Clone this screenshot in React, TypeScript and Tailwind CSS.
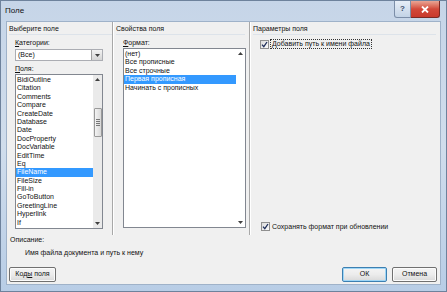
import React from "react";

const FIELDS = [
  "BidiOutline",
  "Citation",
  "Comments",
  "Compare",
  "CreateDate",
  "Database",
  "Date",
  "DocProperty",
  "DocVariable",
  "EditTime",
  "Eq",
  "FileName",
  "FileSize",
  "Fill-in",
  "GoToButton",
  "GreetingLine",
  "Hyperlink",
  "If",
];

const FORMATS = [
  "(нет)",
  "Все прописные",
  "Все строчные",
  "Первая прописная",
  "Начинать с прописных",
];

function Arrow({ up }: { up?: boolean }) {
  return (
    <svg width="5" height="3" viewBox="0 0 5 3" className="block">
      <path d={up ? "M0 3 L2.5 0 L5 3Z" : "M0 0 L2.5 3 L5 0Z"} fill="#404040" />
    </svg>
  );
}

function CheckBox() {
  return (
    <span className="flex h-[9px] w-[9px] items-center justify-center border border-[#8f8f8f] bg-gradient-to-br from-[#dcdcdc] to-[#fbfbfb]">
      <svg width="7" height="7" viewBox="0 0 7 7" className="block">
        <path d="M1 3.6 L2.8 5.6 L6 1" fill="none" stroke="#1f2f5a" strokeWidth="1.3" />
      </svg>
    </span>
  );
}

// scrollbar column for the list boxes
function ScrollBar({ thumb }: { thumb?: boolean }) {
  return (
    <div className="flex w-[9px] flex-col items-center justify-between bg-[#eaeaea] py-[3px]">
      <Arrow up />
      {thumb && (
        <div className="absolute top-[33px] flex h-[29px] w-[8px] flex-col items-center justify-center gap-[1px] rounded-[1px] border border-[#9a9a9a] bg-gradient-to-r from-[#f3f3f3] to-[#d8d8d8]">
          <span className="h-px w-[4px] bg-[#777]" />
          <span className="h-px w-[4px] bg-[#777]" />
          <span className="h-px w-[4px] bg-[#777]" />
          <span className="h-px w-[4px] bg-[#777]" />
        </div>
      )}
      <Arrow />
    </div>
  );
}

function Header({ children }: { children: React.ReactNode }) {
  return (
    <div className="flex flex-col">
      <span className="h-[9px] leading-[9px]">{children}</span>
      <span className="mt-[1px] h-px w-full bg-[#dde3ea]" />
    </div>
  );
}

function Separator() {
  return (
    <div className="flex h-full">
      <span className="w-px bg-[#a8a8a8]" />
      <span className="w-px bg-white" />
    </div>
  );
}

function Button({ children, primary }: { children: React.ReactNode; primary?: boolean }) {
  return (
    <div
      className={
        "flex h-[15px] items-center justify-center rounded-[2px] border bg-gradient-to-b from-[#f4f4f4] via-[#ececec] to-[#d9d9d9] " +
        (primary ? "border-[#3c7fb1] shadow-[inset_0_0_0_1px_#9fd6f6]" : "border-[#707070] shadow-[inset_0_0_0_1px_#fbfbfb]")
      }
    >
      {children}
    </div>
  );
}

export default function App() {
  return (
    <div
      className="relative flex h-[292px] w-[447px] flex-col overflow-hidden border border-[#6e829c] bg-gradient-to-b from-[#c6d5e8] via-[#d0ddec] to-[#b8cde6] text-[7px] text-[#111]"
      style={{ fontFamily: '"Liberation Sans", Arial, sans-serif' }}
    >
      {/* title bar */}
      <div className="flex h-[20px] items-start justify-between pl-[4px] pr-[6px]">
        <span className="mt-[5px] text-[8px] leading-[9px]">Поле</span>
        <div className="flex">
          <div className="flex h-[17px] w-[17px] items-center justify-center rounded-bl-[3px] border border-t-0 border-[#7c8ea8] bg-gradient-to-b from-[#e7eef7] to-[#c3d3e6] text-[8px] font-bold text-[#3b4d68]">
            ?
          </div>
          <div className="flex h-[17px] w-[29px] items-center justify-center rounded-br-[3px] border border-l-0 border-t-0 border-[#7a2a25] bg-gradient-to-b from-[#e8a595] via-[#d2493a] to-[#c9392c]">
            <svg width="8" height="7" viewBox="0 0 8 7">
              <path d="M1 0.5 L7 6.5 M7 0.5 L1 6.5" stroke="white" strokeWidth="1.8" />
            </svg>
          </div>
        </div>
      </div>

      {/* dialog body */}
      <div className="mx-[5px] mb-[6px] flex flex-1 flex-col border border-[#9fb2c9] bg-[#f0f0f0]">
        <div className="flex h-[213px]">
          {/* left column */}
          <div className="flex w-[105px] flex-col pl-[2px] pt-[2px]">
            <Header>Выберите поле</Header>
            <div className="pl-[6px]">
              <div className="mt-[3px] h-[9px] leading-[9px]">
                <span className="underline">К</span>атегории:
              </div>
              <div className="mt-[2px] flex h-[12px] w-[88px] border border-[#abadb3] bg-white">
                <span className="flex-1 pl-[2px] leading-[10px]">(Все)</span>
                <div className="flex w-[11px] items-center justify-center border-l border-[#a0a0a0] bg-gradient-to-b from-[#f2f2f2] to-[#d5d5d5]">
                  <Arrow />
                </div>
              </div>
              <div className="mt-[3px] h-[9px] leading-[9px]">
                <span className="underline">П</span>оля:
              </div>
              <div className="relative mt-[1px] flex h-[155px] w-[88px] border border-[#828790] bg-white">
                <div className="flex flex-1 flex-col pt-[1px]">
                  {FIELDS.map((f) => (
                    <div
                      key={f}
                      className={
                        "h-[8.4px] pl-[1px] leading-[8.4px] " +
                        (f === "FileName" ? "bg-[#3399ff] text-white" : "")
                      }
                    >
                      {f}
                    </div>
                  ))}
                </div>
                <div className="relative flex">
                  <ScrollBar thumb />
                </div>
              </div>
            </div>
          </div>

          <Separator />

          {/* middle column */}
          <div className="flex w-[135px] flex-col pl-[2px] pr-[4px] pt-[2px]">
            <Header>Свойства поля</Header>
            <div className="pl-[7px]">
              <div className="mt-[3px] h-[9px] leading-[9px]">
                <span className="underline">Ф</span>ормат:
              </div>
              <div className="mt-[1px] flex h-[180px] w-[123px] border border-[#828790] bg-white">
                <div className="flex flex-1 flex-col pt-[1px]">
                  {FORMATS.map((f) => (
                    <div
                      key={f}
                      className={
                        "h-[8.4px] pl-[1px] leading-[8.4px] " +
                        (f === "Первая прописная" ? "bg-[#3399ff] text-white" : "")
                      }
                    >
                      {f}
                    </div>
                  ))}
                </div>
                <div className="flex w-[9px] flex-col items-center justify-between py-[3px]">
                  <Arrow up />
                  <Arrow />
                </div>
              </div>
            </div>
          </div>

          <Separator />

          {/* right column */}
          <div className="flex flex-1 flex-col pl-[2px] pr-[4px] pt-[2px]">
            <Header>Параметры поля</Header>
            <div className="mt-[4px] flex items-center gap-[1px] pl-[7px]">
              <CheckBox />
              <span className="border border-dotted border-[#333] px-[1px] leading-[8px]">
                Добавить путь к имени файла
              </span>
            </div>
            <div className="flex-1" />
            <div className="mb-[4px] flex items-center gap-[2px] pl-[8px]">
              <CheckBox />
              <span className="leading-[8px]">Сохранять формат при обновлении</span>
            </div>
          </div>
        </div>

        {/* description */}
        <div className="pl-[3px] leading-[9px]">Описание:</div>
        <div className="mt-[4px] pl-[18px] leading-[9px]">Имя файла документа и путь к нему</div>

        {/* buttons */}
        <div className="mt-[10px] flex items-center pl-[2px] pr-[3px]">
          <div className="w-[47px]">
            <Button>
              <span>
                Код<span className="underline">ы</span> поля
              </span>
            </Button>
          </div>
          <div className="flex-1" />
          <div className="w-[45px]">
            <Button primary>ОК</Button>
          </div>
          <div className="ml-[5px] w-[45px]">
            <Button>Отмена</Button>
          </div>
        </div>
      </div>
    </div>
  );
}
